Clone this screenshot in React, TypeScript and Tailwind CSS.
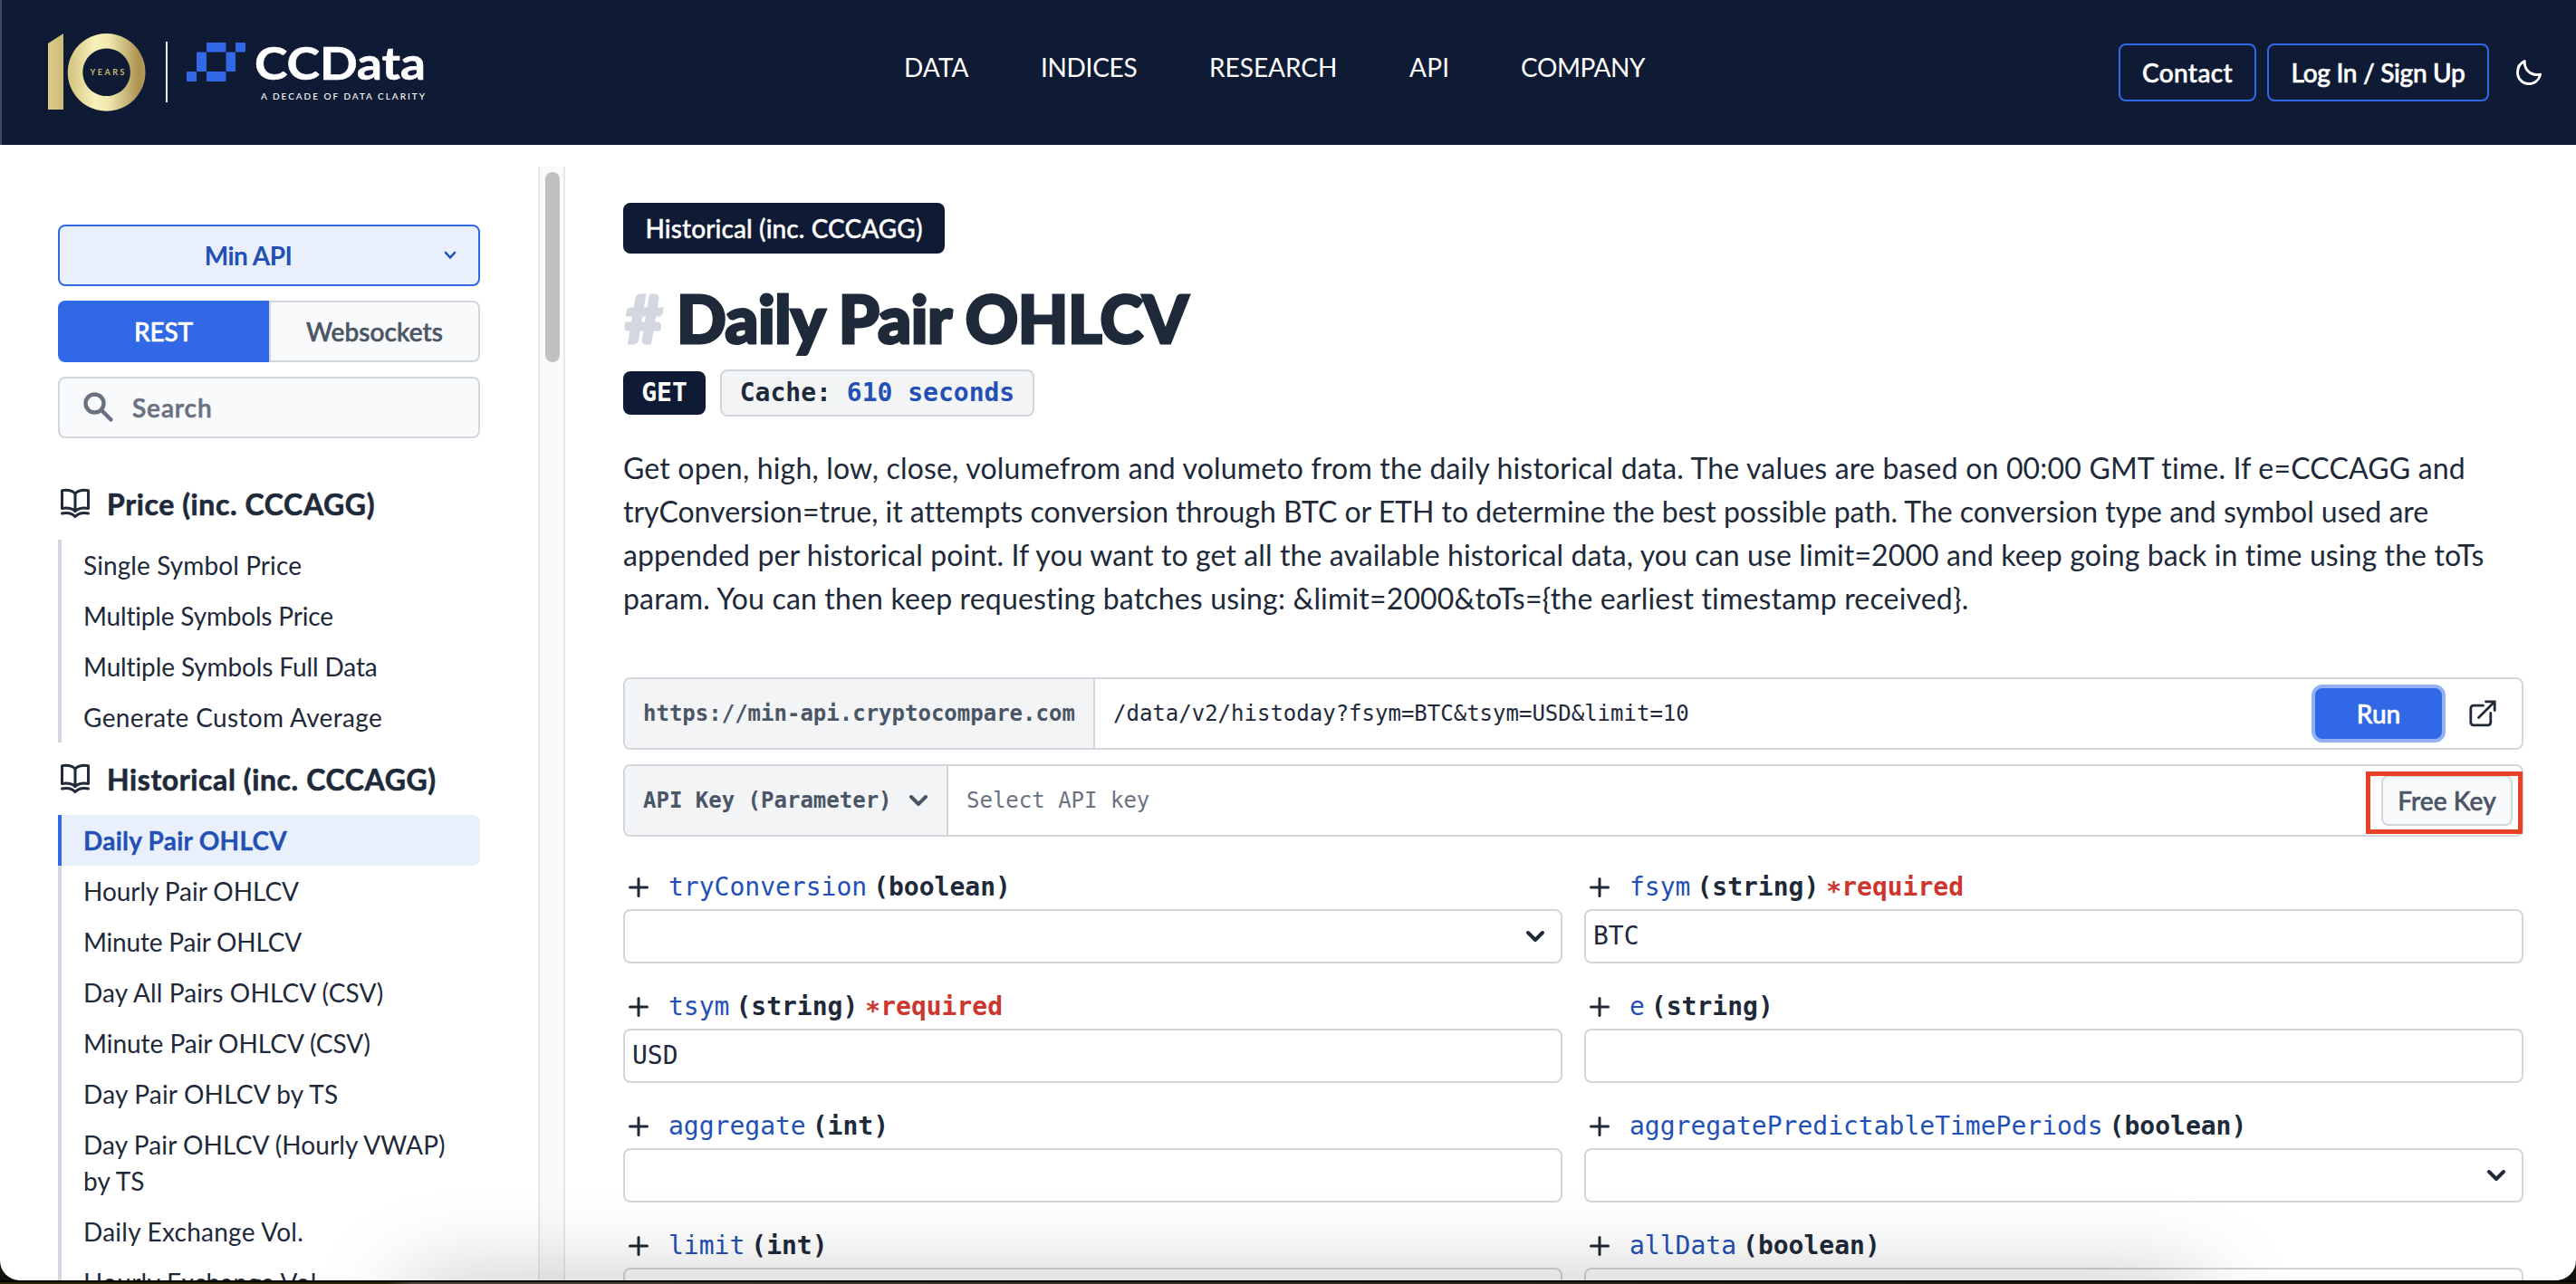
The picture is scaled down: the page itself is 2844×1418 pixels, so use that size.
import React from "react";
import clsx from "clsx";

const NAV = [
  { label: "DATA", cls: "w-[151px] tracking-[0.1px]" },
  { label: "INDICES", cls: "w-[186px] tracking-[-0.3px]" },
  { label: "RESEARCH", cls: "w-[221px] tracking-[0px]" },
  { label: "API", cls: "w-[123px] tracking-[0.3px]" },
  { label: "COMPANY", cls: "tracking-[-0.4px]" },
];

type Entry = { label: string; cls: string; active?: boolean };

const PRICE: Entry[] = [
  { label: "Single Symbol Price", cls: "tracking-[0.1px]" },
  { label: "Multiple Symbols Price", cls: "tracking-[-0.18px]" },
  { label: "Multiple Symbols Full Data", cls: "tracking-[-0.12px]" },
  { label: "Generate Custom Average", cls: "tracking-[0.35px]" },
];

const HISTORICAL: Entry[] = [
  { label: "Daily Pair OHLCV", cls: "tracking-[0.25px]", active: true },
  { label: "Hourly Pair OHLCV", cls: "tracking-[-0.05px]" },
  { label: "Minute Pair OHLCV", cls: "tracking-[-0.2px]" },
  { label: "Day All Pairs OHLCV (CSV)", cls: "tracking-[0.12px]" },
  { label: "Minute Pair OHLCV (CSV)", cls: "tracking-[-0.03px]" },
  { label: "Day Pair OHLCV by TS", cls: "tracking-[0.2px]" },
  { label: "Day Pair OHLCV (Hourly VWAP) by TS", cls: "pr-6 tracking-[0.1px]" },
  { label: "Daily Exchange Vol.", cls: "tracking-[0.25px]" },
  { label: "Hourly Exchange Vol.", cls: "tracking-[0.25px]" },
];

type Param = { name: string; type: string; required?: boolean; value?: string; select?: boolean };

const PARAMS: Param[] = [
  { name: "tryConversion", type: "boolean", select: true },
  { name: "fsym", type: "string", required: true, value: "BTC" },
  { name: "tsym", type: "string", required: true, value: "USD" },
  { name: "e", type: "string" },
  { name: "aggregate", type: "int" },
  { name: "aggregatePredictableTimePeriods", type: "boolean", select: true },
  { name: "limit", type: "int" },
  { name: "allData", type: "boolean", select: true },
];

function Logo() {
  return (
    <svg width="480" height="160" viewBox="0 0 480 160" className="shrink-0">
      <defs>
        <linearGradient id="one" x1="0" x2="1" y1="0" y2="0">
          <stop offset="0" stopColor="#dccd86" />
          <stop offset="1" stopColor="#cdbb78" />
        </linearGradient>
        <linearGradient id="ring" x1="0" x2="1" y1="0" y2="0">
          <stop offset="0" stopColor="#d2c27c" />
          <stop offset="0.35" stopColor="#f6f1ba" />
          <stop offset="0.52" stopColor="#f1eab0" />
          <stop offset="0.92" stopColor="#ad9150" />
          <stop offset="1" stopColor="#b89c5a" />
        </linearGradient>
      </defs>
      <path d="M53 48 70 37V121H53Z" fill="url(#one)" />
      <path
        fillRule="evenodd"
        fill="url(#ring)"
        d="M117.600 37a42.900 42.900 0 1 0 0.010 0ZM117.600 53.500a26.300 26.300 0 1 1 -0.010 0Z"
      />
      <text x="99.500" y="83" textLength="38" fontSize="9" fontWeight="700" fill="#cdb873" fontFamily="Lato, sans-serif">
        YEARS
      </text>
      <rect x="183" y="46" width="2" height="67" fill="#e8eaf0" />
      <g fill="#3168e5">
        <rect x="206" y="79" width="11" height="11" rx="1" />
        <rect x="217" y="57.500" width="11" height="21.500" rx="1" />
        <rect x="228" y="47" width="21.500" height="10.500" rx="1" />
        <rect x="228" y="79" width="21.500" height="11" rx="1" />
        <rect x="249.500" y="57.500" width="10.500" height="21.500" rx="1" />
        <rect x="260" y="47" width="11" height="10.500" rx="1" />
      </g>
      <text
        x="281"
        y="88"
        textLength="189"
        lengthAdjust="spacingAndGlyphs"
        fontSize="49"
        fontWeight="700"
        fill="#fff"
        stroke="#fff"
        strokeWidth="0.600"
        fontFamily="Lato, sans-serif"
      >
        CCData
      </text>
      <text x="288" y="110" textLength="181" fontSize="10" fontWeight="500" fill="#fff" fontFamily="Lato, sans-serif">
        A DECADE OF DATA CLARITY
      </text>
    </svg>
  );
}

function Moon() {
  return (
    <svg width="28" height="28" viewBox="0 0 28 28" fill="none" stroke="#fff" strokeWidth="2.900" strokeLinejoin="round">
      <path d="M9.300 1.600C8.600 10.500 15.500 18.200 26.600 16.300 25 22.700 20 26.500 13.900 26.500 7 26.500 1.500 21 1.500 13.900 1.500 8.300 4.600 3.600 9.300 1.600Z" />
    </svg>
  );
}

function Book() {
  return (
    <svg width="34" height="34" viewBox="0 0 34 34" fill="none" stroke="#1f2937" strokeWidth="3" strokeLinecap="round" strokeLinejoin="round">
      <path d="M2.500 2.700C8 1.700 13.500 2.800 17 6 20.500 2.800 26 1.700 31.500 2.700V22.500C26 21.600 20.500 22.400 17 25.500 13.500 22.400 8 21.600 2.500 22.500Z" />
      <path d="M17 6V25.500M2.500 28C8 27 13.500 28 17 31.500 20.500 28 26 27 31.500 28" />
    </svg>
  );
}

function Chevron({ className, thick }: { className?: string; thick?: boolean }) {
  return (
    <svg width="22" height="14" viewBox="0 0 22 14" fill="none" stroke="currentColor" strokeWidth={thick ? 4 : 3.5} strokeLinecap="round" strokeLinejoin="round" className={className}>
      <path d="M3 3 11 11 19 3" />
    </svg>
  );
}

function Section({ title, titleCls, items }: { title: string; titleCls: string; items: Entry[] }) {
  return (
    <section>
      <h2 className="flex h-20 items-center text-[32px] font-bold text-gray-800">
        <span className="mr-[18px] ml-0.5">
          <Book />
        </span>
        <span className={clsx("mt-0.5 whitespace-nowrap [-webkit-text-stroke:0.6px]", titleCls)}>{title}</span>
      </h2>
      <ul>
        {items.map((it) => (
          <li
            key={it.label}
            className={clsx(
              "border-l-4 py-2 pl-6 text-[28px] leading-10",
              it.cls,
              it.active
                ? "rounded-r-lg border-[#3168e5] bg-[#e9effb] font-bold text-[#2350b5] [-webkit-text-stroke:0.3px]"
                : "border-[#d3d7e0] text-gray-800",
            )}
          >
            {it.label}
          </li>
        ))}
      </ul>
    </section>
  );
}

function Field({ p }: { p: Param }) {
  return (
    <div>
      <div className="flex h-12 items-center pl-1.5 text-[28px] whitespace-nowrap">
        <svg width="22" height="22" viewBox="0 0 22 22" stroke="#1f2937" strokeWidth="3" strokeLinecap="round" className="mr-[22px] shrink-0">
          <path d="M11 1.500V20.500M1.500 11H20.500" />
        </svg>
        <span className="text-[#2350b5]">{p.name}</span>
        <span className="ml-[7px] font-bold">({p.type})</span>
        {p.required && (
          <span className="ml-2 font-bold text-[#cc362f]">
            <span className="inline-block translate-y-[5px]">*</span>required
          </span>
        )}
      </div>
      <div className="flex h-15 items-center justify-between rounded-lg border-2 border-gray-300 bg-white px-2 text-[28px]">
        <span>{p.value}</span>
        {p.select && <Chevron thick className="mr-[9px]" />}
      </div>
    </div>
  );
}

export default function App() {
  return (
    <div className="h-[1418px] w-[2844px] overflow-hidden bg-[#14130a]">
      <div className="relative h-[1414px] overflow-hidden rounded-b-[22px] bg-white font-[Lato,sans-serif] text-gray-800">
        <header className="flex h-40 items-center border-l-2 border-[#3b475c] bg-[#0f1b34] text-[28px] text-white">
          <div className="-ml-0.5 w-[998px]">
            <Logo />
          </div>
          <nav className="-mt-3 flex">
            {NAV.map((n) => (
              <a key={n.label} className={n.cls}>
                {n.label}
              </a>
            ))}
          </nav>
          <div className="mr-[38px] ml-auto flex items-center font-medium [-webkit-text-stroke:0.6px]">
            <a className="mr-3 flex h-16 w-[152px] items-center justify-center rounded-lg border-2 border-[#3168e5] tracking-[0.4px]">Contact</a>
            <a className="mr-[30px] flex h-16 w-[245px] items-center justify-center rounded-lg border-2 border-[#3168e5] tracking-[-0.3px]">
              Log In / Sign Up
            </a>
            <Moon />
          </div>
        </header>

        <div className="flex h-[1254px]">
          <aside className="w-[594px] shrink-0 pt-22 pr-16 pl-16">
            <div className="flex h-17 items-center rounded-lg border-2 border-[#3168e5] bg-[#e9effb] text-[28px] font-bold text-[#2350b5]">
              <span className="flex-1 pr-2 text-center tracking-[-0.5px]">Min API</span>
              <svg width="14" height="10" viewBox="0 0 14 10" fill="none" stroke="currentColor" strokeWidth="2.600" strokeLinecap="round" strokeLinejoin="round" className="mr-6">
                <path d="M2 2 7 7.500 12 2" />
              </svg>
            </div>
            <div className="mt-4 flex h-17 text-[28px] font-medium [-webkit-text-stroke:0.6px]">
              <div className="flex w-[233px] items-center justify-center rounded-l-lg bg-[#3168e5] tracking-[-0.2px] text-white">REST</div>
              <div className="flex flex-1 items-center justify-center rounded-r-lg border-2 border-gray-300 bg-gray-50 tracking-[0.1px] text-gray-600">
                Websockets
              </div>
            </div>
            <div className="mt-4 flex h-17 items-center rounded-lg border-2 border-gray-300 bg-gray-50 pl-[26px] text-[28px] text-gray-500">
              <svg width="34" height="34" viewBox="0 0 34 34" fill="none" stroke="currentColor" strokeWidth="4.400" strokeLinecap="round">
                <circle cx="12.500" cy="12.500" r="10" />
                <path d="M20.500 20.500 30.500 30.500" />
              </svg>
              <span className="ml-[20px] font-semibold tracking-[0.9px] [-webkit-text-stroke:0.6px]">Search</span>
            </div>
            <div className="mt-8">
              <Section title="Price (inc. CCCAGG)" titleCls="tracking-[0.6px]" items={PRICE} />
              <Section title="Historical (inc. CCCAGG)" titleCls="tracking-[0.6px]" items={HISTORICAL} />
            </div>
          </aside>

          <div className="mt-6 w-[30px] shrink-0 border-x-2 border-[#e8e8e8] bg-[#fafafa] pt-1.5 pl-1.5">
            <div className="h-[210px] w-4 rounded-full bg-[#c1c1c1]" />
          </div>

          <main className="ml-16 w-[2098px] shrink-0 pt-16">
            <div className="flex h-14 w-[355px] items-center justify-center rounded-lg bg-[#0f1b34] text-[28px] font-medium tracking-[0.1px] whitespace-nowrap text-white [-webkit-text-stroke:0.4px]">
              Historical (inc. CCCAGG)
            </div>
            <h1 className="mt-[35px] flex h-18 items-center text-[72px] leading-none font-black whitespace-nowrap [-webkit-text-stroke:3px]">
              <span className="w-[59px] pl-0.5 text-[#d3d7e0]">#</span>
              <span className="tracking-[-0.450px]">Daily Pair OHLCV</span>
            </h1>
            <div className="mt-[21px] flex items-center gap-4 font-['DejaVu_Sans_Mono',monospace] text-[28px] font-bold">
              <span className="flex h-12 w-[91px] items-center justify-center rounded-lg bg-[#0f1b34] text-white">GET</span>
              <span className="flex h-13 w-[347px] items-center justify-center rounded-lg border-2 border-gray-300 bg-gray-100 whitespace-pre">
                Cache: <span className="text-[#2350b5]">610 seconds</span>
              </span>
            </div>
            <p className="mt-[33px] text-[32px] leading-12 whitespace-nowrap">
              <span className="block tracking-[0.180px]">
                Get open, high, low, close, volumefrom and volumeto from the daily historical data. The values are based on 00:00 GMT time. If e=CCCAGG and
              </span>
              <span className="block tracking-[-0.030px]">
                tryConversion=true, it attempts conversion through BTC or ETH to determine the best possible path. The conversion type and symbol used are
              </span>
              <span className="block tracking-[0.105px]">
                appended per historical point. If you want to get all the available historical data, you can use limit=2000 and keep going back in time using the toTs
              </span>
              <span className="block tracking-[0.170px]">
                param. You can then keep requesting batches using: &amp;limit=2000&amp;toTs=&#123;the earliest timestamp received&#125;.
              </span>
            </p>

            <div className="mt-[63px] flex h-20 overflow-hidden rounded-lg border-2 border-gray-300 font-['DejaVu_Sans_Mono',monospace] text-[24px]">
              <div className="flex w-[519px] items-center border-r-2 border-gray-300 bg-gray-100 pl-5 font-bold text-gray-600">
                https://min-api.cryptocompare.com
              </div>
              <div className="flex flex-1 items-center pl-5">/data/v2/histoday?fsym=BTC&amp;tsym=USD&amp;limit=10</div>
              <div className="flex items-center">
                <button className="h-16 w-[148px] rounded-[12px] border-4 border-[#92b0f2] bg-[#3168e5] font-[Lato,sans-serif] text-[28px] font-medium text-white [-webkit-text-stroke:0.6px]">
                  Run
                </button>
                <svg width="30" height="30" viewBox="0 0 30 30" fill="none" stroke="#1f2937" strokeWidth="2.800" strokeLinecap="round" strokeLinejoin="miter" className="mr-[28px] ml-[26px]">
                  <path d="M15.500 6.200H4.800A3 3 0 0 0 1.800 9.200V24.800A3 3 0 0 0 4.800 27.800H20.800A3 3 0 0 0 23.800 24.800V14.500" />
                  <path d="M10.500 19.500 28 2M18.500 1.800H28.200V11.500" />
                </svg>
              </div>
            </div>

            <div className="relative mt-4 flex h-20 rounded-lg border-2 border-gray-300 font-['DejaVu_Sans_Mono',monospace] text-[24px]">
              <div className="flex w-[357px] items-center rounded-l-md border-r-2 border-gray-300 bg-gray-100 pl-5 font-bold whitespace-nowrap text-gray-600">
                API Key (Parameter)
                <Chevron thick className="ml-[18px]" />
              </div>
              <div className="flex flex-1 items-center pl-5 text-gray-500">Select API key</div>
              <div className="mr-2.5 flex h-14 w-[145px] items-center justify-center self-center rounded-lg border-2 border-gray-300 bg-gray-50 font-[Lato,sans-serif] text-[28px] font-medium tracking-[0.1px] text-gray-600 [-webkit-text-stroke:0.6px]">
                Free Key
              </div>
              <div className="absolute top-1.5 -right-px h-[69px] w-[173px] border-[5px] border-[#ea4025]" />
            </div>

            <div className="mt-8 grid grid-cols-2 gap-6 font-['DejaVu_Sans_Mono',monospace]">
              {PARAMS.map((p) => (
                <Field key={p.name} p={p} />
              ))}
            </div>
          </main>
        </div>

        <div className="absolute top-[1418px] left-[440px] h-20 w-[2000px] rounded-[40px] shadow-[0_0_100px_rgba(0,0,0,0.26)]" />
      </div>
      <div className="h-0.5 bg-black" />
      <div className="h-0.5 bg-linear-to-r from-[#2b2508] from-15% via-[#4b4638] via-16% to-[#1a1708] to-86%" />
    </div>
  );
}
